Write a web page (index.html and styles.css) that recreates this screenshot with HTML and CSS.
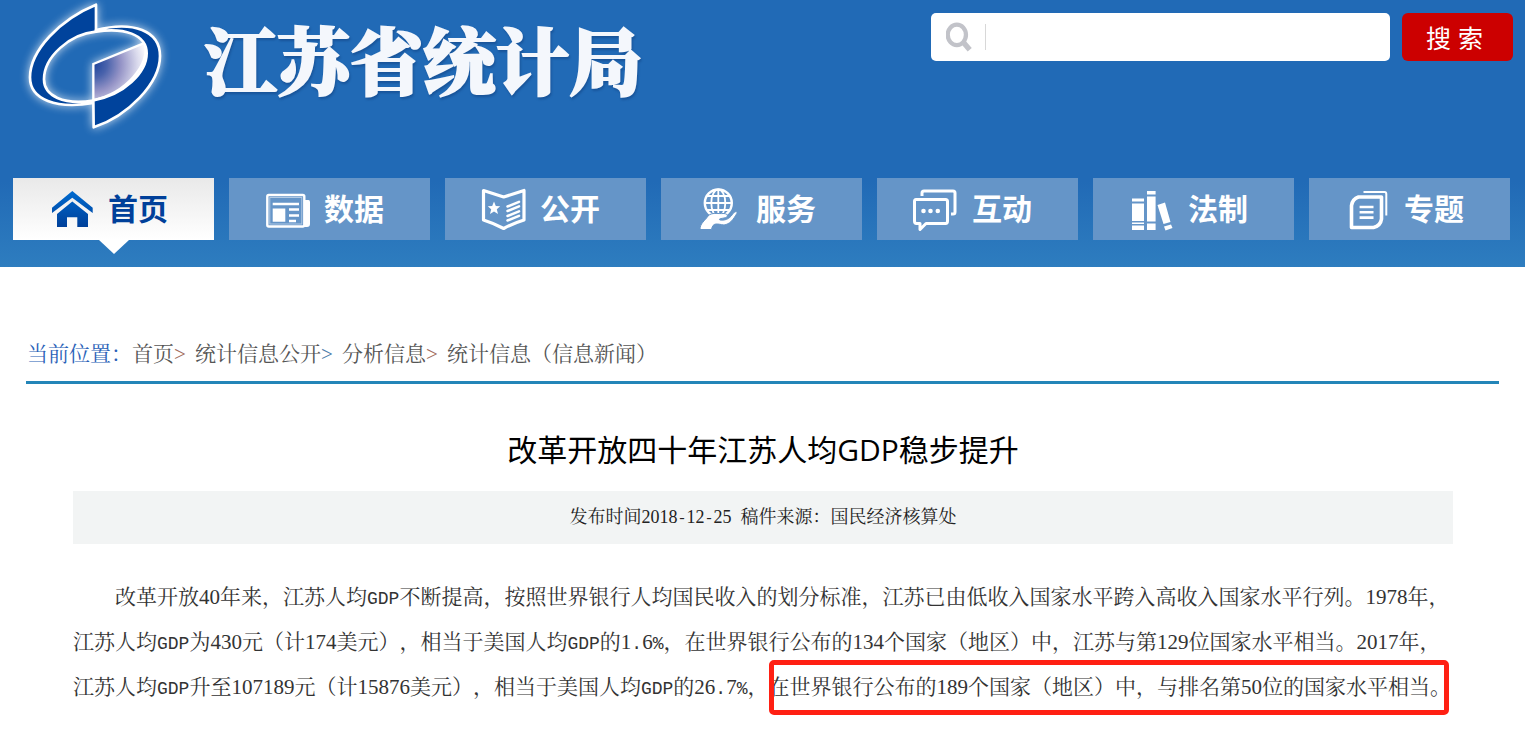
FILE: index.html
```html
<!DOCTYPE html>
<html lang="zh-CN">
<head>
<meta charset="utf-8">
<meta name="viewport" content="width=device-width, initial-scale=1">
<title>改革开放四十年江苏人均GDP稳步提升</title>
<link rel="stylesheet" href="styles.css">
</head>
<body>
<header class="site-header">
  <div class="masthead">
    <a class="brand" href="#">
      <svg class="brand-mark" viewBox="60 0 450 408" aria-hidden="true">
        <defs>
          <radialGradient id="wedge" gradientUnits="userSpaceOnUse" cx="280" cy="192" r="165">
            <stop offset="0" stop-color="#1c439b"/>
            <stop offset=".25" stop-color="#4a63ac"/>
            <stop offset=".5" stop-color="#9493c6"/>
            <stop offset=".8" stop-color="#d9d9ec"/>
            <stop offset="1" stop-color="#ffffff"/>
          </radialGradient>
        </defs>
        <path d="M280 192L436 128C448 196 380 278 280 301Z" fill="url(#wedge)" stroke="#fff" stroke-width="7"/>
        <g fill="#00439c" stroke="#fff" stroke-width="8" stroke-linejoin="round">
          <path d="M288 14C180 58 90 152 90 232C90 300 170 328 280 309L280 302C190 316 132 288 132 238C132 170 210 102 288 95Z"/>
          <path d="M288 90C400 62 480 92 480 168C480 250 384 348 281 382L280 301C372 285 440 218 440 160C440 102 370 82 288 95Z"/>
        </g>
      </svg>
      <span class="brand-name">江苏省统计局</span>
    </a>
    <form class="search" role="search">
      <div class="search-box">
        <svg class="search-icon" viewBox="0 0 24 28" aria-hidden="true"><ellipse cx="10" cy="12" rx="8.500" ry="9.500" fill="none" stroke="#c2c3c9" stroke-width="4"/><path d="M16 19L22 26" stroke="#c2c3c9" stroke-width="5"/></svg>
        <input class="search-input" type="text" aria-label="搜索">
      </div>
      <button class="search-button" type="submit">搜 索</button>
    </form>
  </div>
  <nav class="nav">
    <a class="tab tab-active" href="#">
      <svg class="tab-icon" viewBox="0 0 48 48" aria-hidden="true">
        <defs><linearGradient id="house" x1="0" y1="6" x2="0" y2="42" gradientUnits="userSpaceOnUse"><stop offset="0" stop-color="#006bd0"/><stop offset="1" stop-color="#00409a"/></linearGradient></defs>
        <path fill="url(#house)" d="M23.300 6L43.700 22.700V28L23.300 12.700L3 28V22.700ZM23.300 16.500L39 29V42H28.300V32.300H18V42H8V29Z"/>
      </svg>首页</a>
    <a class="tab" href="#">
      <svg class="tab-icon" viewBox="0 0 48 48" aria-hidden="true">
        <rect x="2.300" y="10" width="37" height="31.500" rx="1.500" fill="none" stroke="#fff" stroke-width="2.400"/>
        <rect x="4.800" y="12.500" width="32" height="26.500" fill="none" stroke="#fff" stroke-opacity=".5" stroke-width="1"/>
        <path fill="#fff" d="M39 15H43.500Q45 15 45 17V39Q45 42 42 42H37Q39 41 39 39ZM7.700 23.500H20.300V36.700H7.700Z"/>
        <path d="M7.700 19H34M24 24.500H34M24 30.500H34M24 36H31" stroke="#fff" stroke-width="2.400"/>
      </svg>数据</a>
    <a class="tab" href="#">
      <svg class="tab-icon" viewBox="0 0 48 48" aria-hidden="true">
        <path d="M2.500 5.500L22.700 12L43 5.500V35Q33 38 22.700 43.500Q12 38 2.500 35Z" fill="none" stroke="#fff" stroke-width="3.200" stroke-linejoin="round"/>
        <path fill="#fff" d="M13 16.500L14.800 21L19.200 21.300L15.800 24.300L17 29L13 26.400L9 29L10.200 24.300L6.800 21.300L11.200 21Z"/>
        <path d="M26.500 21.500L38 16.800M26.500 26L38 21.300M26.500 31L38 26.300M26.500 35.500L38 30.800" stroke="#fff" stroke-width="2.500" stroke-linecap="round"/>
      </svg>公开</a>
    <a class="tab" href="#">
      <svg class="tab-icon" viewBox="0 0 48 48" aria-hidden="true">
        <g fill="none" stroke="#fff" stroke-width="1.800"><circle cx="21.300" cy="18" r="13.500" stroke-width="2.400"/><ellipse cx="21.300" cy="18" rx="7" ry="13.500"/><path d="M21.300 4.500V31.500M7.800 18H34.800M10 11H32.600M10 25H32.600"/></g>
        <path d="M3 44.500C3 38 8 36 11 31C15 27 20 29 27 28.500C32 29 31 32.500 27 33C24 33.500 21 34 23 35C30 36 34 32 36 28.500C38 26 41 26 39.800 28.500C36 35 33 39 27 40C20 39 16 37 14.500 44.500Z" fill="#fff" stroke="#6595c8" stroke-width="1"/>
      </svg>服务</a>
    <a class="tab" href="#">
      <svg class="tab-icon" viewBox="0 0 48 48" aria-hidden="true">
        <g fill="none" stroke="#fff" stroke-width="3" stroke-linejoin="round"><path d="M9 11V8Q9 6 11 6H40Q42 6 42 8V27Q42 29 40 29H38"/><path d="M3 14.500H32.500Q34.500 14.500 34.500 16.500V36Q34.500 38.500 32.500 38.500H13L7 44.500V38.500H3.500Q1.500 38.500 1.500 36V16.500Q1.500 14.500 3 14.500Z"/></g>
        <g fill="#fff"><circle cx="10.500" cy="26" r="2.300"/><circle cx="17.500" cy="26" r="2.300"/><circle cx="24.800" cy="26" r="2.300"/></g>
      </svg>互动</a>
    <a class="tab" href="#">
      <svg class="tab-icon" viewBox="0 0 48 48" aria-hidden="true">
        <path fill="#fff" d="M3 13.500H15V16.500H3ZM3 18.500H15V36H3ZM3 37.500H15V39H3ZM3 40.500H15V45H3ZM18 6H26.600V9.500H18ZM18 11.500H26.600V36.500H18ZM18 38.500H26.600V45H18ZM28.500 20L36 17.500L41.500 37L34.500 39ZM35 41.500L42 39.500L43.500 43L36.500 45.500Z"/>
      </svg>法制</a>
    <a class="tab" href="#">
      <svg class="tab-icon" viewBox="0 0 48 48" aria-hidden="true">
        <path d="M13.500 12H36.500V34Q35.500 41 28.500 42.500H6.500V20.500Q7.500 14 13.500 12Z" fill="none" stroke="#fff" stroke-width="3.600" stroke-linejoin="round"/>
        <path d="M18.500 7H39.500Q41.300 7 41.300 9V30.500" fill="none" stroke="#fff" stroke-width="2"/>
        <path d="M14.600 22H28.500M14.600 27.300H28.500M14.600 32.600H28.500" stroke="#fff" stroke-width="2.600"/>
      </svg>专题</a>
  </nav>
</header>
<main class="page">
  <nav class="crumbs" aria-label="当前位置">
    <span class="crumbs-label">当前位置：</span>
    <a href="#">首页</a><span class="sep sep-warm">&gt;</span>
    <a href="#">统计信息公开</a><span class="sep">&gt;</span>
    <a href="#">分析信息</a><span class="sep sep-warm">&gt;</span>
    <a href="#">统计信息（信息新闻）</a>
  </nav>
  <article class="article">
    <h1 class="title">改革开放四十年江苏人均GDP稳步提升</h1>
    <p class="meta">发布时间2018<span class="dash">-</span>12<span class="dash">-</span>25 &nbsp;稿件来源：国民经济核算处</p>
    <p class="text">改革开放40年来，江苏人均<span class="half">GDP</span>不断提高，按照世界银行人均国民收入的划分标准，江苏已由低收入国家水平跨入高收入国家水平行列。1978年，江苏人均<span class="half">GDP</span>为430元（计174美元），相当于美国人均<span class="half">GDP</span>的1<span class="half">.</span>6<span class="half">%</span>，在世界银行公布的134个国家（地区）中，江苏与第129位国家水平相当。2017年，江苏人均<span class="half">GDP</span>升至107189元（计15876美元），相当于美国人均<span class="half">GDP</span>的26<span class="half">.</span>7<span class="half">%</span>，<span class="marked">在世界银行公布的189个国家（地区）中，与排名第50位的国家水平相当。</span></p>
  </article>
</main>
</body>
</html>
```
FILE: styles.css
```css
* {
  box-sizing: border-box;
}

body {
  margin: 0;
  background: #fff;
  color: #333;
  font-family: "Liberation Serif", "Noto Serif CJK SC", "Noto Sans CJK SC", serif;
  text-spacing-trim: space-all;
}

a {
  color: inherit;
  text-decoration: none;
}

.site-header {
  padding-bottom: 27px;
  background: linear-gradient(#216ab6 0, #216ab6 68%, #2e7dbf 100%);
}

.masthead {
  display: flex;
  justify-content: space-between;
  gap: 24px;
  min-height: 178px;
  padding: 0 12px 0 20px;
}

.brand {
  display: flex;
  align-items: flex-start;
  gap: 34px;
  white-space: nowrap;
}

.brand-mark {
  width: 150px;
  height: 136px;
  overflow: visible;
  filter: drop-shadow(0 0 5px rgba(255, 255, 255, .75));
}

.brand-name {
  padding-top: 4px;
  font-family: "Noto Serif CJK SC", "Noto Sans CJK SC", serif;
  font-size: 73px;
  font-weight: 900;
  line-height: 108px;
  color: #f4f7fc;
  -webkit-text-stroke: 2px #f4f7fc;
  filter: drop-shadow(1px 2px 1px rgba(10, 50, 110, .4));
}

.search {
  display: flex;
  flex: 0 1 582px;
  align-items: flex-start;
  gap: 12px;
  padding-top: 13px;
}

.search-box {
  display: flex;
  flex: 1;
  align-items: center;
  height: 48px;
  padding-left: 15px;
  border-radius: 5px;
  background: #fff;
}

.search-icon {
  width: 26px;
  height: 30px;
  margin-right: 13px;
}

.search-input {
  flex: 1;
  min-width: 0;
  height: 26px;
  padding: 0 12px;
  border: 0;
  border-left: 1px solid #d8d8d8;
  outline: 0;
  background: transparent;
  font-size: 20px;
}

.search-button {
  width: 111px;
  height: 48px;
  padding: 0 6px 0 0;
  border: 0;
  border-radius: 6px;
  background: #c00;
  color: #fff;
  font-family: "Liberation Sans", "Noto Sans CJK SC", sans-serif;
  font-size: 25px;
}

.nav {
  display: grid;
  grid-template-columns: repeat(7, 1fr);
  gap: 15px;
  padding: 0 15px 0 13px;
}

.tab {
  position: relative;
  display: flex;
  align-items: center;
  justify-content: center;
  gap: 11px;
  height: 62px;
  padding: 0 10px 4px 0;
  background: #6595c8;
  color: #fff;
  font-family: "Noto Sans CJK SC", sans-serif;
  font-size: 30px;
  font-weight: 700;
  line-height: 40px;
  white-space: nowrap;
}

.tab-active {
  background: linear-gradient(#e9e9e9, #fff);
  color: #00409a;
}

.tab-active::after {
  content: "";
  position: absolute;
  top: 100%;
  left: 50%;
  border: 15px solid transparent;
  border-top: 14px solid #fff;
  border-bottom: 0;
  transform: translateX(-50%);
}

.tab-icon {
  width: 48px;
  height: 48px;
  margin-top: 4px;
}

.page {
  padding: 67px 26px 20px;
}

.crumbs {
  display: flex;
  flex-wrap: wrap;
  padding: 0 0 7px 1px;
  border-bottom: 3px solid #2385b8;
  color: #555;
  font-size: 21px;
  line-height: 40px;
}

.crumbs-label {
  color: #2a62b8;
}

.sep {
  width: 21px;
  color: #4a7aa8;
}

.sep-warm {
  color: #a06a58;
}

.article {
  padding: 0 46px 0 47px;
}

.title {
  margin: 0;
  padding: 43px 0 18px;
  color: #000;
  font-family: "Open Sans", "Noto Sans CJK SC", sans-serif;
  font-size: 30px;
  font-weight: 400;
  line-height: 46px;
  text-align: center;
}

.meta {
  margin: 0;
  padding: 6px 0 7px;
  background: #f2f4f4;
  color: #222;
  font-size: 18px;
  line-height: 40px;
  text-align: center;
}

.dash {
  font-family: "Liberation Mono", monospace;
  font-size: 15px;
  line-height: 1;
}

.text {
  margin: 31px 0 0;
  font-size: 21px;
  line-height: 45px;
  text-indent: 2em;
}

.half {
  font-family: "Liberation Mono", monospace;
  font-size: 18px;
  line-height: 1;
}

.marked {
  position: relative;
  display: inline-block;
  text-indent: 0;
}

.marked::after {
  content: "";
  position: absolute;
  inset: -5px 2px -5px 1px;
  border: 5px solid #ff2013;
  border-radius: 5px;
}
```
